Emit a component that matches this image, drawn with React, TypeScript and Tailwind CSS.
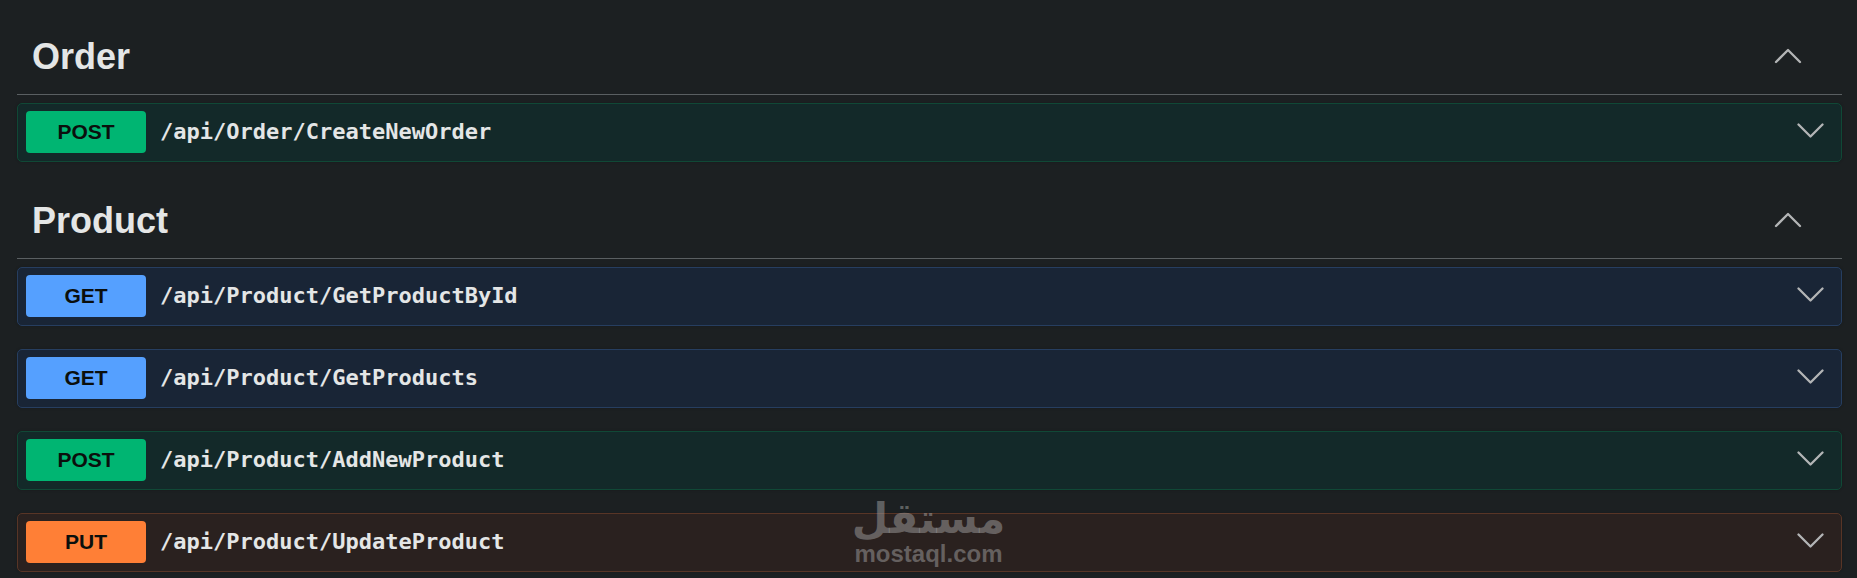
import { useState } from 'react';
import clsx from 'clsx';

type Method = 'GET' | 'POST' | 'PUT';

interface Operation {
  method: Method;
  path: string;
}

interface Tag {
  name: string;
  operations: Operation[];
}

const TAGS: Tag[] = [
  {
    name: 'Order',
    operations: [{ method: 'POST', path: '/api/Order/CreateNewOrder' }],
  },
  {
    name: 'Product',
    operations: [
      { method: 'GET', path: '/api/Product/GetProductById' },
      { method: 'GET', path: '/api/Product/GetProducts' },
      { method: 'POST', path: '/api/Product/AddNewProduct' },
      { method: 'PUT', path: '/api/Product/UpdateProduct' },
    ],
  },
];

// Row and badge colors per HTTP method
const METHOD_CONFIG: Record<Method, { row: string; badge: string }> = {
  GET: { row: 'bg-[#192536] border-[#263e60]', badge: 'bg-[#55a0ff]' },
  POST: { row: 'bg-[#132929] border-[#104836]', badge: 'bg-[#00b572]' },
  PUT: { row: 'bg-[#2a211f] border-[#583526]', badge: 'bg-[#ff7f36]' },
};

function Chevron({ up = false }: { up?: boolean }) {
  return (
    <svg
      viewBox="0 0 28 20"
      className="h-5 w-7 shrink-0"
      fill="none"
      stroke="#b3b5b6"
      strokeWidth="2.3"
      strokeLinecap="round"
      strokeLinejoin="round"
      aria-hidden="true"
    >
      <path d={up ? 'M2 15 L14 3 L26 15' : 'M1.5 2.5 L13.5 14.5 L25.5 2.5'} />
    </svg>
  );
}

function OperationRow({ method, path }: Operation) {
  const config = METHOD_CONFIG[method];

  return (
    <button
      type="button"
      className={clsx(
        'flex w-full items-center rounded-[5px] border pt-[7px] pr-4 pb-2 pl-2 text-left shadow-[0_0_3px_rgba(0,0,0,0.19)]',
        config.row
      )}
    >
      <span
        className={clsx(
          'w-[120px] shrink-0 rounded text-center text-[21px] leading-[42px] font-bold text-[#0b0f0d]',
          config.badge
        )}
      >
        {method}
      </span>
      <span className="min-w-0 flex-1 truncate pl-[14px] font-['DejaVu_Sans_Mono',monospace] text-[22px] leading-8 font-bold">
        {path}
      </span>
      <Chevron />
    </button>
  );
}

function TagSection({ name, operations }: Tag) {
  const [open, setOpen] = useState(true);

  return (
    <section>
      <h3 className="border-b border-[#5a5f62]">
        <button
          type="button"
          aria-expanded={open}
          onClick={() => setOpen(!open)}
          className="flex w-full items-center justify-between py-4 pr-10 pl-[15px] text-4xl leading-[42px] font-bold"
        >
          {name}
          <Chevron up={open} />
        </button>
      </h3>
      {open && (
        <div className="flex flex-col gap-[23px] pt-2">
          {operations.map((op) => (
            <OperationRow key={op.path} {...op} />
          ))}
        </div>
      )}
    </section>
  );
}

// Brand stamp laid over the bottom of the page
function Watermark() {
  return (
    <div className="pointer-events-none absolute bottom-[10px] left-1/2 flex -translate-x-1/2 flex-col items-center font-bold text-[#a0a0a0]/50">
      <span lang="ar" dir="rtl" className="font-['DejaVu_Sans',sans-serif] text-[42px] leading-[42px]">
        مستقل
      </span>
      <span className="text-2xl leading-7">mostaql.com</span>
    </div>
  );
}

export default function App() {
  return (
    <main className="relative flex min-h-screen flex-col gap-[22px] bg-[#1c2022] pt-5 pr-[15px] pl-[17px] font-['Liberation_Sans',Arial,sans-serif] text-[#e4e6e6]">
      {TAGS.map((tag) => (
        <TagSection key={tag.name} {...tag} />
      ))}
      <Watermark />
    </main>
  );
}
